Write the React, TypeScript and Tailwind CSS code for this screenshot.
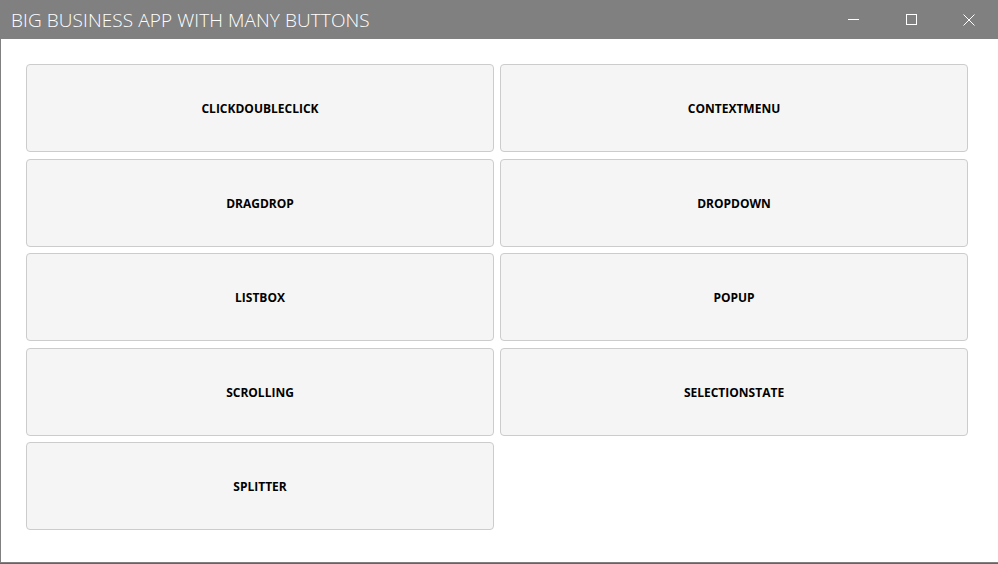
import React from 'react';

const buttons = [
  'CLICKDOUBLECLICK',
  'CONTEXTMENU',
  'DRAGDROP',
  'DROPDOWN',
  'LISTBOX',
  'POPUP',
  'SCROLLING',
  'SELECTIONSTATE',
  'SPLITTER',
];

const App: React.FC = () => {
  return (
    <div className="w-[998px] h-[564px] flex flex-col bg-white overflow-hidden" style={{ fontFamily: '"Open Sans", "Noto Sans", sans-serif' }}>
      {/* title bar */}
      <div className="h-[39px] bg-[#808080] flex items-center shrink-0">
        <span className="pl-[11px] pt-[2px] text-[19px] font-light text-white tracking-[0.1px] flex-1">BIG BUSINESS APP WITH MANY BUTTONS</span>
        <div className="flex items-center h-full">
          <div className="w-[58px] h-full flex items-center justify-center">
            <div className="w-[11px] h-px bg-white" />
          </div>
          <div className="w-[58px] h-full flex items-center justify-center">
            <div className="w-[11px] h-[11px] border border-white" />
          </div>
          <div className="w-[58px] h-full flex items-center justify-center">
            <svg width="12" height="12" viewBox="0 0 12 12">
              <path d="M0.5 0.5 L11.5 11.5 M11.5 0.5 L0.5 11.5" stroke="white" strokeWidth="1" fill="none" />
            </svg>
          </div>
        </div>
      </div>

      {/* content */}
      <div className="flex-1 border-l border-[#808080] border-b border-b-[#808080]">
        <div className="pl-[25px] pt-[25px] grid grid-cols-[468px_468px] gap-x-[6px] gap-y-[6.5px] auto-rows-[88px]">
          {buttons.map((b) => (
            <button
              key={b}
              className="bg-[#f5f5f5] border border-[#cccccc] rounded-[4px] text-[12px] font-bold text-black flex items-center justify-center pt-[2px]"
            >
              {b}
            </button>
          ))}
        </div>
      </div>
      <div className="h-px bg-[#1f78b4] shrink-0" />
    </div>
  );
};

export default App;
